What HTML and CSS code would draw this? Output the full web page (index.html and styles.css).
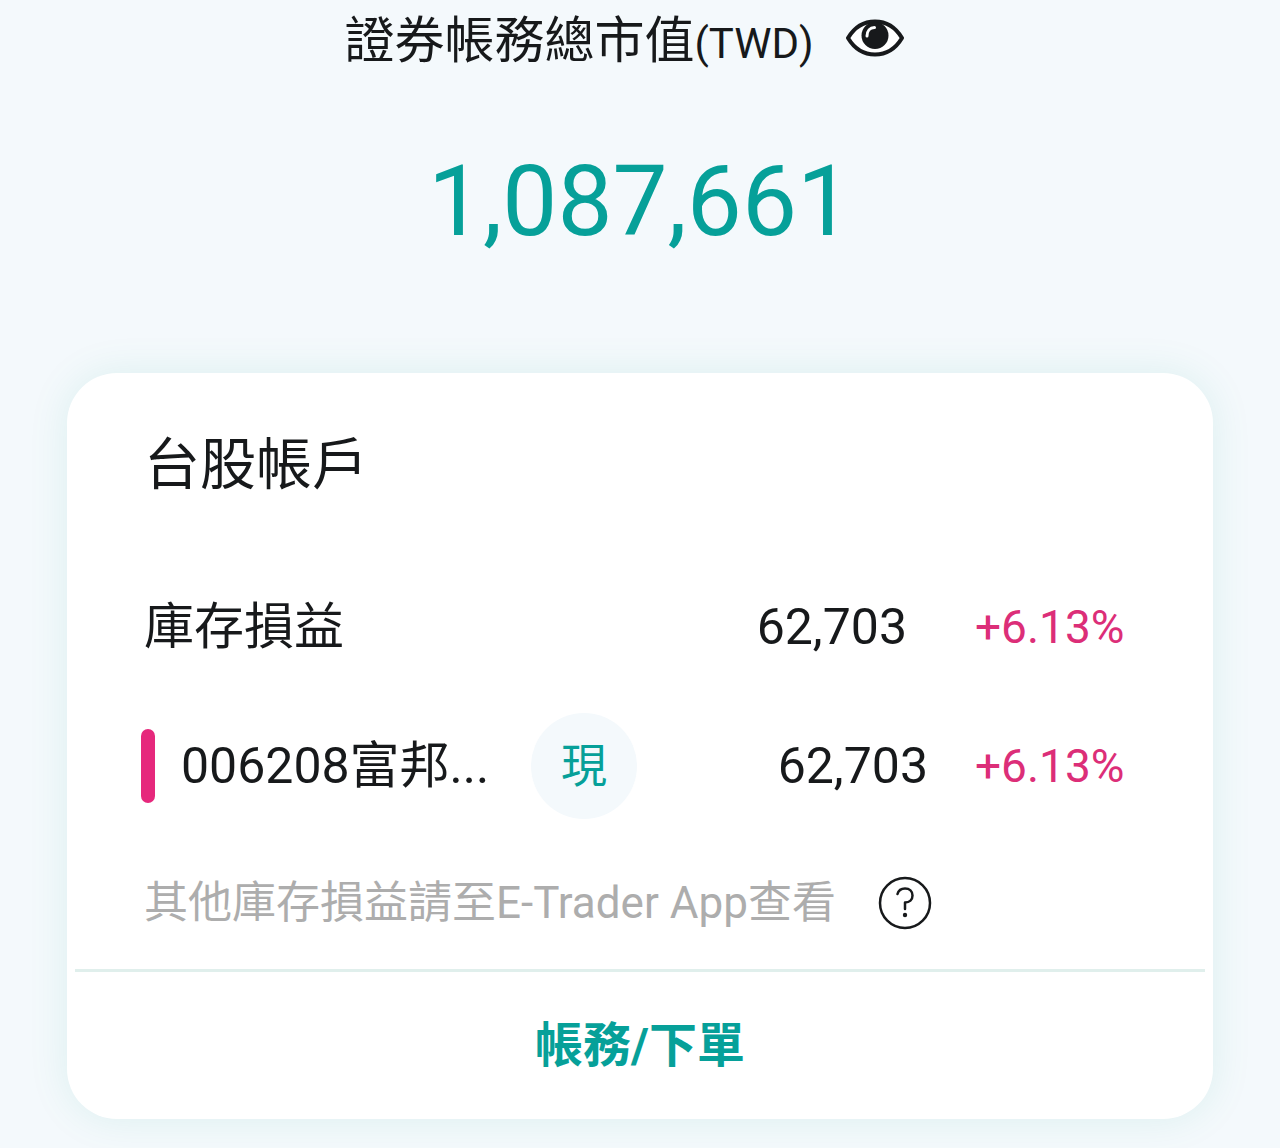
FILE: index.html
```html
<!DOCTYPE html>
<html lang="zh-Hant">
<head>
    <meta charset="UTF-8">
    <meta name="viewport" content="width=device-width, initial-scale=1.0">
    <title>證券帳務</title>
    <link rel="stylesheet" href="styles.css">
</head>
<body>
    <header class="summary">
        <div class="summary-title">
            <h1>證券帳務總市值<span class="currency">(TWD)</span></h1>
            <button type="button" class="eye-button" aria-label="顯示或隱藏金額">
                <svg class="eye-icon" viewBox="0 0 58 38" aria-hidden="true">
                    <path d="M2 19C8 9 17 2.500 29 2.500S50 9 56 19C50 29 41 35.500 29 35.500S8 29 2 19Z" fill="#fff" stroke="#17191b" stroke-width="4" stroke-linejoin="round"/>
                    <circle cx="29" cy="16.500" r="13.500" fill="#17191b"/>
                    <path d="M21 17C21 12 24 8.500 28.500 8.500" fill="none" stroke="#fff" stroke-width="3" stroke-linecap="round"/>
                </svg>
            </button>
        </div>
        <p class="total">1,087,661</p>
    </header>

    <main class="card">
        <div class="card-body">
            <h2>台股帳戶</h2>

            <!-- Account total -->
            <div class="row">
                <span class="label">庫存損益</span>
                <span class="value">62,703</span>
                <span class="percent">+6.13%</span>
            </div>

            <!-- Holding -->
            <div class="row holding">
                <span class="bar"></span>
                <span class="name">006208富邦...</span>
                <span class="badge">現</span>
                <span class="value">62,703</span>
                <span class="percent">+6.13%</span>
            </div>

            <div class="note">
                <p>其他庫存損益請至E-Trader App查看</p>
                <button type="button" class="help-button" aria-label="說明">
                    <svg class="help-icon" viewBox="0 0 54 54" aria-hidden="true">
                        <circle cx="27" cy="27" r="25" fill="none" stroke="#17191b" stroke-width="2.500"/>
                        <path d="M19.500 18C20.500 14.500 23.500 12.500 27 12.500C31.500 12.500 34.500 15.500 34.500 19.500C34.500 24 31.500 26.500 27 26.500V33" fill="none" stroke="#17191b" stroke-width="2.500" stroke-linecap="round" stroke-linejoin="round"/>
                        <circle cx="27" cy="39" r="2.200" fill="#17191b"/>
                    </svg>
                </button>
            </div>
        </div>
        <button type="button" class="order-button">帳務/下單</button>
    </main>
</body>
</html>
```
FILE: styles.css
```css
* {
    box-sizing: border-box;
}
body {
    margin: 0;
    padding: 11px 67px 29px;
    background-color: #f4f9fc;
    color: #17191b;
    font-family: Roboto, "Noto Sans CJK TC", sans-serif;
    font-size: 50px;
    line-height: 60px;
}
h1, h2, p {
    margin: 0;
    font-weight: 400;
}
button {
    border: none;
    background: none;
    font-family: inherit;
    cursor: pointer;
}
.summary {
    text-align: center;
}
.summary-title {
    display: flex;
    justify-content: center;
    align-items: center;
}
h1 {
    font-size: 50px;
}
.currency {
    font-size: 42px;
}
.eye-button {
    display: flex;
    padding: 0 32px 10px;
}
.eye-icon {
    width: 58px;
    height: 38px;
}
.total {
    margin: 68px 0 111px;
    color: #06a099;
    font-size: 98px;
    line-height: 120px;
}
.card {
    background-color: white;
    border-radius: 50px;
    box-shadow: 0 0 40px rgba(6,160,130,0.1);
}
.card-body {
    margin: 0 8px;
    padding: 60px 82px 36px 69px;
    border-bottom: 3px solid #e0efec;
}
h2 {
    margin-bottom: 100px;
    font-size: 56px;
    line-height: 64px;
}
.row {
    display: flex;
    align-items: center;
}
.value {
    margin-left: auto;
    margin-right: 68px;
}
.percent {
    width: 148px;
    color: #dc2e78;
    font-size: 46px;
    text-align: right;
}
.holding {
    margin: 56px 0 54px -3px;
}
.holding .value {
    margin-right: 47px;
}
.bar {
    width: 14px;
    height: 74px;
    border-radius: 7px;
    background-color: #e6287c;
}
.name {
    width: 376px;
    padding-left: 26px;
    white-space: nowrap;
}
.badge {
    width: 106px;
    height: 106px;
    border-radius: 50%;
    background-color: #f4f9fc;
    color: #06a099;
    font-size: 46px;
    line-height: 106px;
    text-align: center;
}
.note {
    display: flex;
    align-items: center;
    gap: 42px;
    color: #adadad;
    font-size: 44px;
}
.help-button {
    display: flex;
    padding: 0;
}
.help-icon {
    width: 54px;
    height: 54px;
}
.order-button {
    display: block;
    width: 100%;
    height: 147px;
    padding: 0 0 10px;
    color: #06a099;
    font-size: 48px;
    font-weight: 700;
}
```
